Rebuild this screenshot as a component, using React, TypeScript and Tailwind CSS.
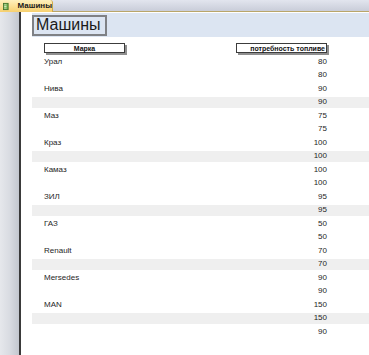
import React from "react";

const groups: [string, string, string][] = [
  ["Урал", "80", "80"],
  ["Нива", "90", "90"],
  ["Маз", "75", "75"],
  ["Краз", "100", "100"],
  ["Камаз", "100", "100"],
  ["ЗИЛ", "95", "95"],
  ["ГАЗ", "50", "50"],
  ["Renault", "70", "70"],
  ["Mersedes", "90", "90"],
  ["MAN", "150", "150"],
];

export default function App() {
  return (
    <div className="w-[369px] h-[355px] flex flex-col overflow-hidden bg-white font-['Liberation_Sans',Arial,sans-serif]">
      {/* tab bar */}
      <div className="h-[12px] flex shrink-0 bg-gradient-to-b from-[#e2e5ee] to-[#c9cdd9] border-b border-[#b9a66a]">
        <div className="w-[53px] h-[12px] flex items-center gap-[3px] pl-[3px] bg-gradient-to-b from-[#fff1bd] to-[#f7d06e] border-r border-[#d0a94a] rounded-tr-[3px]">
          <svg width="7" height="9" viewBox="0 0 7 9">
            <rect x="0.5" y="0.5" width="6" height="8" fill="#6fae4a" stroke="#3d6e2a" />
            <rect x="1.5" y="2" width="3" height="1" fill="#e8f3d8" />
            <rect x="1.5" y="4" width="3" height="1" fill="#e8f3d8" />
            <rect x="1.5" y="6" width="3" height="1" fill="#e8f3d8" />
          </svg>
          <span className="ml-[6px] text-[8px] font-bold leading-none text-[#1a1a1a]">Машины</span>
        </div>
      </div>
      <div className="flex-1 flex">
        {/* left strip */}
        <div className="w-[21px] shrink-0 bg-gradient-to-r from-[#e6e8ec] via-[#d9dce2] to-[#c3c7cf] border-r-[2px] border-[#3a3a3a]" />
        <div className="flex-1 flex flex-col pl-[11px]">
          {/* title band */}
          <div className="h-[24px] mt-[1px] bg-[#dce5f2] flex items-center">
            <div className="h-[21px] w-[75px] border-[2px] border-[#7f8185] flex items-center pl-[2px] text-[16px] leading-none text-[#1a1a1a]">
              Машины
            </div>
          </div>
          {/* column headers */}
          <div className="h-[18px] flex items-start pt-[6px] pl-[12px]">
            <div className="w-[81px] h-[10px] bg-white border border-[#3c3c3c] shadow-[2px_2px_0_#8f8f8f] flex items-center justify-center text-[7px] font-bold leading-none text-[#111]">
              Марка
            </div>
            <div className="ml-[111px] w-[91px] h-[10px] bg-white border border-[#3c3c3c] shadow-[2px_2px_0_#8f8f8f] flex items-center justify-end pr-[1px] text-[7px] font-bold leading-none text-[#111]">
              потребность топливе
            </div>
          </div>
          {/* rows */}
          <div className="flex flex-col text-[8px] leading-none text-[#1e1e1e]">
            {groups.map(([name, a, b], i) => (
              <div key={i} className="flex flex-col">
                <div className="h-[13px] flex items-center justify-between pl-[12px] pr-[42px]">
                  <span>{name}</span>
                  <span>{a}</span>
                </div>
                <div className="h-[14px] flex items-center">
                  <div
                    className={
                      "h-[11px] w-full flex items-center justify-end pr-[42px] " +
                      (i % 2 === 1 ? "bg-[#efefef]" : "")
                    }
                  >
                    <span>{b}</span>
                  </div>
                </div>
              </div>
            ))}
            <div className="h-[13px] flex items-center justify-end pr-[42px]">
              <span>90</span>
            </div>
          </div>
        </div>
      </div>
    </div>
  );
}
